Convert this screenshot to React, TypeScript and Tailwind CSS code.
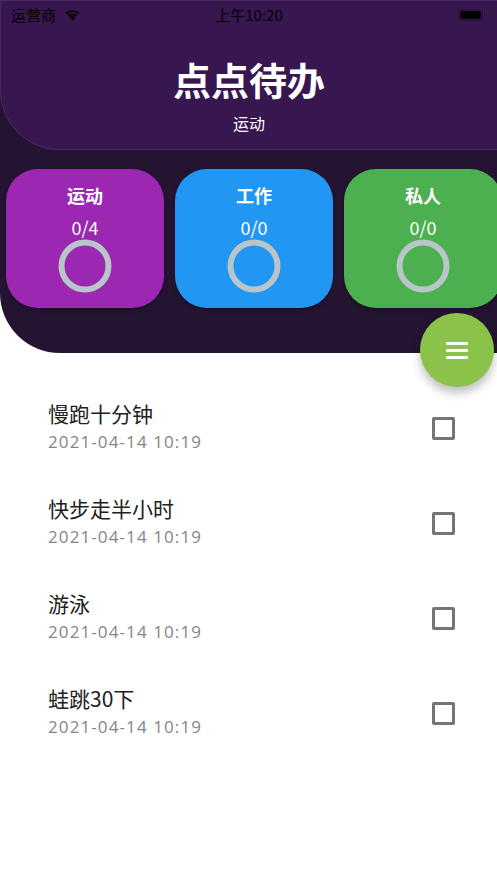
const categories = [
  { name: "运动", count: "0/4", color: "bg-[#9c27b0]" },
  { name: "工作", count: "0/0", color: "bg-[#2196f3]" },
  { name: "私人", count: "0/0", color: "bg-[#4caf50]" },
];

const todos = [
  { title: "慢跑十分钟", time: "2021-04-14 10:19" },
  { title: "快步走半小时", time: "2021-04-14 10:19" },
  { title: "游泳", time: "2021-04-14 10:19" },
  { title: "蛙跳30下", time: "2021-04-14 10:19" },
];

const font = { fontFamily: '"Noto Sans CJK SC", "Noto Sans", sans-serif' };

const StatusBar = () => (
  <div className="h-[28px] px-[10px] flex items-center justify-between text-[15px] text-black relative">
    <div className="flex items-center gap-[8px]">
      <span>运营商</span>
      <svg width="17" height="12" viewBox="0 0 17 12">
        <path d="M8.5 12 L5.6 8.6 A4.4 4.4 0 0 1 11.4 8.6 Z" fill="#000" />
        <path d="M3.7 6.5 A7 7 0 0 1 13.3 6.5 L12.1 7.8 A5.4 5.4 0 0 0 4.9 7.8 Z" fill="#000" />
        <path d="M1.4 4 A10.4 10.4 0 0 1 15.6 4 L14.4 5.3 A8.7 8.7 0 0 0 2.6 5.3 Z" fill="#000" />
      </svg>
    </div>
    <span className="absolute left-1/2 -translate-x-1/2">上午10:20</span>
    <div className="flex items-center gap-[1px] pr-[2px]">
      <div className="w-[25px] h-[12px] rounded-[3px] border border-[#2a0f3d] p-[1px]">
        <div className="w-full h-full rounded-[2px] bg-black" />
      </div>
      <div className="w-[1.5px] h-[4px] bg-[#2a0f3d] rounded-r" />
    </div>
  </div>
);

const Ring = () => (
  <svg width="54" height="54" viewBox="0 0 54 54">
    <circle cx="27" cy="27" r="23.5" fill="none" stroke="#b8c5c9" strokeWidth="6" />
  </svg>
);

const App = () => {
  return (
    <div className="w-[497px] h-[883px] bg-white overflow-hidden relative" style={font}>
      <div className="bg-[#241432] h-[353px] rounded-bl-[60px]">
        <div className="bg-[#38164f] h-[150px] rounded-bl-[60px] border-b border-l border-t border-[#4a2a63]">
          <StatusBar />
          <div className="flex flex-col items-center text-white">
            <h1 className="text-[38px] font-bold leading-[50px] mt-[25px]">点点待办</h1>
            <p className="text-[16px] leading-[22px] mt-[8px]">运动</p>
          </div>
        </div>
        <div className="flex gap-[11px] pl-[6px] pt-[19px]">
          {categories.map((c) => (
            <div
              key={c.name}
              className={`${c.color} shrink-0 w-[158px] h-[139px] rounded-[32px] flex flex-col items-center text-white shadow-[0_2px_4px_rgba(0,0,0,0.3)]`}
            >
              <span className="text-[18px] font-bold leading-[24px] mt-[14px]">{c.name}</span>
              <span className="text-[18px] leading-[24px] mt-[8px]">{c.count}</span>
              <div>
                <Ring />
              </div>
            </div>
          ))}
        </div>
      </div>

      <button className="absolute left-[420px] top-[313px] w-[74px] h-[74px] rounded-full bg-[#8bc34a] flex flex-col items-center justify-center gap-[4px] shadow-[0_6px_10px_rgba(0,0,0,0.25)]">
        <span className="block w-[22px] h-[3px] bg-white" />
        <span className="block w-[22px] h-[3px] bg-white" />
        <span className="block w-[22px] h-[3px] bg-white" />
      </button>

      <ul className="pt-[47px]">
        {todos.map((t) => (
          <li key={t.title} className="h-[95px] flex items-start pl-[48px] pr-[42px]">
            <div className="flex-1 flex flex-col">
              <span className="text-[21px] leading-[27px] text-[#212121]">{t.title}</span>
              <span
                className="text-[17px] leading-[24px] text-[#858585] mt-[3px] tracking-[1.1px]"
                style={{ fontFamily: '"Open Sans", "Noto Sans", sans-serif' }}
              >
                {t.time}
              </span>
            </div>
            <div className="w-[23px] h-[23px] border-[3px] border-[#757575] rounded-[2px] mt-[17px]" />
          </li>
        ))}
      </ul>
    </div>
  );
};

export default App;
